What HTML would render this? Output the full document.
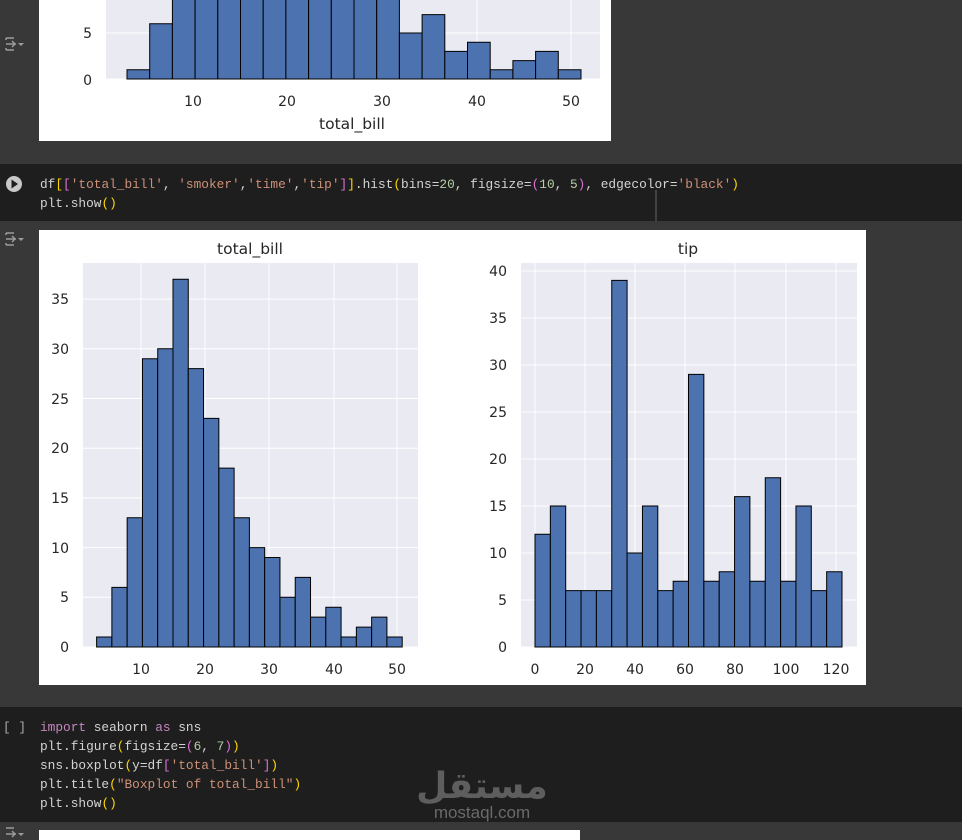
<!DOCTYPE html>
<html><head><meta charset="utf-8"><style>
html,body{margin:0;padding:0;background:#383838;}
svg{display:block}
.t{font-family:"DejaVu Sans","Liberation Sans",sans-serif;fill:#262626;font-size:14px}
.c{font-family:"Liberation Mono",monospace;font-size:12.8px;fill:#d4d4d4;white-space:pre}
.s{fill:#ce9178}.n{fill:#b5cea8}.y{fill:#ffd700}.p{fill:#da70d6}.b{fill:#179fff}.k{fill:#c586c0}
rect.bar{fill:#4c72b0;stroke:#000;stroke-width:1}
</style></head><body>
<svg width="962" height="840" viewBox="0 0 962 840" xmlns="http://www.w3.org/2000/svg">
<rect width="962" height="840" fill="#383838"/>
<rect x="39" y="0" width="572" height="141" fill="#fff"/>
<rect x="106" y="0" width="494" height="79" fill="#eaeaf2"/>
<g stroke="#fff" stroke-width="1">
<line x1="106" x2="600" y1="33" y2="33"/><line x1="106" x2="600" y1="79" y2="79"/>
<line x1="193" x2="193" y1="0" y2="79"/><line x1="287" x2="287" y1="0" y2="79"/><line x1="382" x2="382" y1="0" y2="79"/><line x1="477" x2="477" y1="0" y2="79"/><line x1="571" x2="571" y1="0" y2="79"/>
</g>
<g transform="translate(127,79) scale(22.7,-9.2)">
<rect class="bar" style="vector-effect:non-scaling-stroke" x="0" y="0" width="1" height="1"/>
<rect class="bar" style="vector-effect:non-scaling-stroke" x="1" y="0" width="1" height="6"/>
<rect class="bar" style="vector-effect:non-scaling-stroke" x="2" y="0" width="1" height="13"/>
<rect class="bar" style="vector-effect:non-scaling-stroke" x="3" y="0" width="1" height="29"/>
<rect class="bar" style="vector-effect:non-scaling-stroke" x="4" y="0" width="1" height="30"/>
<rect class="bar" style="vector-effect:non-scaling-stroke" x="5" y="0" width="1" height="37"/>
<rect class="bar" style="vector-effect:non-scaling-stroke" x="6" y="0" width="1" height="28"/>
<rect class="bar" style="vector-effect:non-scaling-stroke" x="7" y="0" width="1" height="23"/>
<rect class="bar" style="vector-effect:non-scaling-stroke" x="8" y="0" width="1" height="18"/>
<rect class="bar" style="vector-effect:non-scaling-stroke" x="9" y="0" width="1" height="13"/>
<rect class="bar" style="vector-effect:non-scaling-stroke" x="10" y="0" width="1" height="10"/>
<rect class="bar" style="vector-effect:non-scaling-stroke" x="11" y="0" width="1" height="9"/>
<rect class="bar" style="vector-effect:non-scaling-stroke" x="12" y="0" width="1" height="5"/>
<rect class="bar" style="vector-effect:non-scaling-stroke" x="13" y="0" width="1" height="7"/>
<rect class="bar" style="vector-effect:non-scaling-stroke" x="14" y="0" width="1" height="3"/>
<rect class="bar" style="vector-effect:non-scaling-stroke" x="15" y="0" width="1" height="4"/>
<rect class="bar" style="vector-effect:non-scaling-stroke" x="16" y="0" width="1" height="1"/>
<rect class="bar" style="vector-effect:non-scaling-stroke" x="17" y="0" width="1" height="2"/>
<rect class="bar" style="vector-effect:non-scaling-stroke" x="18" y="0" width="1" height="3"/>
<rect class="bar" style="vector-effect:non-scaling-stroke" x="19" y="0" width="1" height="1"/>
</g>
<g class="t" text-anchor="end"><text x="92" y="38">5</text><text x="92" y="85">0</text></g>
<g class="t" text-anchor="middle"><text x="193" y="106">10</text><text x="287" y="106">20</text><text x="382" y="106">30</text><text x="477" y="106">40</text><text x="571" y="106">50</text>
<text x="352" y="129" style="font-size:15.5px">total_bill</text></g>

<rect x="0" y="164" width="962" height="57" fill="#1e1e1e"/>
<circle cx="14" cy="184" r="8" fill="#c8c8c8"/><path d="M11.5 179.5 L18 184 L11.5 188.5Z" fill="#1e1e1e"/>
<line x1="656" y1="190" x2="656" y2="221" stroke="#666"/>
<text class="c" x="40" y="188">df<tspan class="y">[</tspan><tspan class="p">[</tspan><tspan class="s">'total_bill'</tspan>, <tspan class="s">'smoker'</tspan>,<tspan class="s">'time'</tspan>,<tspan class="s">'tip'</tspan><tspan class="p">]</tspan><tspan class="y">]</tspan>.hist<tspan class="y">(</tspan>bins=<tspan class="n">20</tspan>, figsize=<tspan class="p">(</tspan><tspan class="n">10</tspan>, <tspan class="n">5</tspan><tspan class="p">)</tspan>, edgecolor=<tspan class="s">'black'</tspan><tspan class="y">)</tspan></text>
<text class="c" x="40" y="207">plt.show<tspan class="y">()</tspan></text>

<g stroke="#9a9a9a" stroke-width="1.5" fill="none">
<path d="M6 38h8M6 44h10M12 41l3 3-3 3M6 50h8M6 38v2M6 48v2"/>
<path d="M6 233h8M6 239h10M12 236l3 3-3 3M6 245h8M6 233v2M6 243v2"/>
<path d="M6 828h8M6 834h10M12 831l3 3-3 3"/>
</g>
<path d="M18 43h6l-3 3z M18 238h6l-3 3z M18 833h6l-3 3z" fill="#9a9a9a"/>

<rect x="39" y="230" width="827" height="455" fill="#fff"/>
<rect x="83" y="263" width="335" height="384" fill="#eaeaf2"/>
<rect x="521" y="263" width="336" height="384" fill="#eaeaf2"/>
<g stroke="#fff" stroke-width="1">
<line x1="83" x2="418" y1="647" y2="647"/><line x1="83" x2="418" y1="597.3" y2="597.3"/><line x1="83" x2="418" y1="547.6" y2="547.6"/><line x1="83" x2="418" y1="497.9" y2="497.9"/><line x1="83" x2="418" y1="448.2" y2="448.2"/><line x1="83" x2="418" y1="398.5" y2="398.5"/><line x1="83" x2="418" y1="348.8" y2="348.8"/><line x1="83" x2="418" y1="299.1" y2="299.1"/>
<line y1="263" y2="647" x1="141" x2="141"/><line y1="263" y2="647" x1="205" x2="205"/><line y1="263" y2="647" x1="269" x2="269"/><line y1="263" y2="647" x1="334" x2="334"/><line y1="263" y2="647" x1="397" x2="397"/>
<line x1="521" x2="857" y1="647" y2="647"/><line x1="521" x2="857" y1="600" y2="600"/><line x1="521" x2="857" y1="553" y2="553"/><line x1="521" x2="857" y1="506" y2="506"/><line x1="521" x2="857" y1="459" y2="459"/><line x1="521" x2="857" y1="412" y2="412"/><line x1="521" x2="857" y1="365" y2="365"/><line x1="521" x2="857" y1="318" y2="318"/><line x1="521" x2="857" y1="271" y2="271"/>
<line y1="263" y2="647" x1="535" x2="535"/><line y1="263" y2="647" x1="585" x2="585"/><line y1="263" y2="647" x1="635" x2="635"/><line y1="263" y2="647" x1="685" x2="685"/><line y1="263" y2="647" x1="735" x2="735"/><line y1="263" y2="647" x1="786" x2="786"/><line y1="263" y2="647" x1="836" x2="836"/>
</g>
<g transform="translate(96.6,647) scale(15.28,-9.94)">
<rect class="bar" style="vector-effect:non-scaling-stroke" x="0" y="0" width="1" height="1"/>
<rect class="bar" style="vector-effect:non-scaling-stroke" x="1" y="0" width="1" height="6"/>
<rect class="bar" style="vector-effect:non-scaling-stroke" x="2" y="0" width="1" height="13"/>
<rect class="bar" style="vector-effect:non-scaling-stroke" x="3" y="0" width="1" height="29"/>
<rect class="bar" style="vector-effect:non-scaling-stroke" x="4" y="0" width="1" height="30"/>
<rect class="bar" style="vector-effect:non-scaling-stroke" x="5" y="0" width="1" height="37"/>
<rect class="bar" style="vector-effect:non-scaling-stroke" x="6" y="0" width="1" height="28"/>
<rect class="bar" style="vector-effect:non-scaling-stroke" x="7" y="0" width="1" height="23"/>
<rect class="bar" style="vector-effect:non-scaling-stroke" x="8" y="0" width="1" height="18"/>
<rect class="bar" style="vector-effect:non-scaling-stroke" x="9" y="0" width="1" height="13"/>
<rect class="bar" style="vector-effect:non-scaling-stroke" x="10" y="0" width="1" height="10"/>
<rect class="bar" style="vector-effect:non-scaling-stroke" x="11" y="0" width="1" height="9"/>
<rect class="bar" style="vector-effect:non-scaling-stroke" x="12" y="0" width="1" height="5"/>
<rect class="bar" style="vector-effect:non-scaling-stroke" x="13" y="0" width="1" height="7"/>
<rect class="bar" style="vector-effect:non-scaling-stroke" x="14" y="0" width="1" height="3"/>
<rect class="bar" style="vector-effect:non-scaling-stroke" x="15" y="0" width="1" height="4"/>
<rect class="bar" style="vector-effect:non-scaling-stroke" x="16" y="0" width="1" height="1"/>
<rect class="bar" style="vector-effect:non-scaling-stroke" x="17" y="0" width="1" height="2"/>
<rect class="bar" style="vector-effect:non-scaling-stroke" x="18" y="0" width="1" height="3"/>
<rect class="bar" style="vector-effect:non-scaling-stroke" x="19" y="0" width="1" height="1"/>
</g>
<g transform="translate(535,647) scale(15.35,-9.4)">
<rect class="bar" style="vector-effect:non-scaling-stroke" x="0" y="0" width="1" height="12"/>
<rect class="bar" style="vector-effect:non-scaling-stroke" x="1" y="0" width="1" height="15"/>
<rect class="bar" style="vector-effect:non-scaling-stroke" x="2" y="0" width="1" height="6"/>
<rect class="bar" style="vector-effect:non-scaling-stroke" x="3" y="0" width="1" height="6"/>
<rect class="bar" style="vector-effect:non-scaling-stroke" x="4" y="0" width="1" height="6"/>
<rect class="bar" style="vector-effect:non-scaling-stroke" x="5" y="0" width="1" height="39"/>
<rect class="bar" style="vector-effect:non-scaling-stroke" x="6" y="0" width="1" height="10"/>
<rect class="bar" style="vector-effect:non-scaling-stroke" x="7" y="0" width="1" height="15"/>
<rect class="bar" style="vector-effect:non-scaling-stroke" x="8" y="0" width="1" height="6"/>
<rect class="bar" style="vector-effect:non-scaling-stroke" x="9" y="0" width="1" height="7"/>
<rect class="bar" style="vector-effect:non-scaling-stroke" x="10" y="0" width="1" height="29"/>
<rect class="bar" style="vector-effect:non-scaling-stroke" x="11" y="0" width="1" height="7"/>
<rect class="bar" style="vector-effect:non-scaling-stroke" x="12" y="0" width="1" height="8"/>
<rect class="bar" style="vector-effect:non-scaling-stroke" x="13" y="0" width="1" height="16"/>
<rect class="bar" style="vector-effect:non-scaling-stroke" x="14" y="0" width="1" height="7"/>
<rect class="bar" style="vector-effect:non-scaling-stroke" x="15" y="0" width="1" height="18"/>
<rect class="bar" style="vector-effect:non-scaling-stroke" x="16" y="0" width="1" height="7"/>
<rect class="bar" style="vector-effect:non-scaling-stroke" x="17" y="0" width="1" height="15"/>
<rect class="bar" style="vector-effect:non-scaling-stroke" x="18" y="0" width="1" height="6"/>
<rect class="bar" style="vector-effect:non-scaling-stroke" x="19" y="0" width="1" height="8"/>
</g>
<g class="t" text-anchor="middle">
<text x="250" y="254" style="font-size:15.5px">total_bill</text>
<text x="688" y="254" style="font-size:15.5px">tip</text>
<text x="141" y="674">10</text><text x="205" y="674">20</text><text x="269" y="674">30</text><text x="334" y="674">40</text><text x="397" y="674">50</text>
<text x="535" y="674">0</text><text x="585" y="674">20</text><text x="635" y="674">40</text><text x="685" y="674">60</text><text x="735" y="674">80</text><text x="786" y="674">100</text><text x="836" y="674">120</text>
</g>
<g class="t" text-anchor="end">
<text x="69" y="652">0</text><text x="69" y="602">5</text><text x="69" y="553">10</text><text x="69" y="503">15</text><text x="69" y="453">20</text><text x="69" y="404">25</text><text x="69" y="354">30</text><text x="69" y="304">35</text>
<text x="507" y="652">0</text><text x="507" y="605">5</text><text x="507" y="558">10</text><text x="507" y="511">15</text><text x="507" y="464">20</text><text x="507" y="417">25</text><text x="507" y="370">30</text><text x="507" y="323">35</text><text x="507" y="276">40</text>
</g>

<rect x="0" y="707" width="962" height="115" fill="#1e1e1e"/>
<text class="c" x="3" y="731" style="fill:#aaa">[ ]</text>
<text class="c" x="40" y="731"><tspan class="k">import</tspan> seaborn <tspan class="k">as</tspan> sns</text>
<text class="c" x="40" y="750">plt.figure<tspan class="y">(</tspan>figsize=<tspan class="p">(</tspan><tspan class="n">6</tspan>, <tspan class="n">7</tspan><tspan class="p">)</tspan><tspan class="y">)</tspan></text>
<text class="c" x="40" y="769">sns.boxplot<tspan class="y">(</tspan>y=df<tspan class="p">[</tspan><tspan class="s">'total_bill'</tspan><tspan class="p">]</tspan><tspan class="y">)</tspan></text>
<text class="c" x="40" y="788">plt.title<tspan class="y">(</tspan><tspan class="s">"Boxplot of total_bill"</tspan><tspan class="y">)</tspan></text>
<text class="c" x="40" y="807">plt.show<tspan class="y">()</tspan></text>
<text x="482" y="798" text-anchor="middle" style="font-family:'DejaVu Sans',sans-serif;font-size:36px;font-weight:bold;fill:#6a6a6a;opacity:0.85">مستقل</text>
<text x="482" y="818" text-anchor="middle" style="font-family:'Liberation Sans',sans-serif;font-size:17px;fill:#6a6a6a">mostaql.com</text>
<rect x="39" y="830" width="541" height="10" fill="#fff"/>
</svg>
</body></html>
